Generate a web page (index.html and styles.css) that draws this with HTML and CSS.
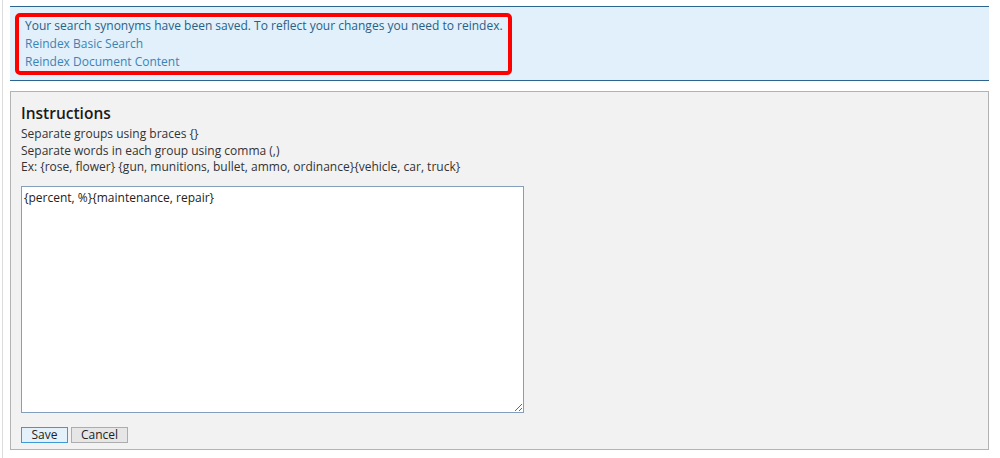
FILE: index.html
```html
<!DOCTYPE html>
<html>
<head>
<meta charset="utf-8">
<link rel="stylesheet" href="styles.css">
</head>
<body>
<div class="page">
  <div class="notice">
    <div class="msg">
      <div class="msg-text">Your search synonyms have been saved. To reflect your changes you need to reindex.</div>
      <a class="msg-link" href="#">Reindex Basic Search</a>
      <a class="msg-link" href="#">Reindex Document Content</a>
    </div>
  </div>
  <div class="panel">
    <h2 class="title">Instructions</h2>
    <div class="help">Separate groups using braces {}</div>
    <div class="help">Separate words in each group using comma (,)</div>
    <div class="help">Ex: {rose, flower} {gun, munitions, bullet, ammo, ordinance}{vehicle, car, truck}</div>
    <textarea class="editor">{percent, %}{maintenance, repair}</textarea>
    <div class="actions">
      <button class="btn btn-primary">Save</button>
      <button class="btn">Cancel</button>
    </div>
  </div>
</div>
</body>
</html>
```

FILE: styles.css
```css
html, body {
  margin: 0;
  padding: 0;
  background: #fff;
}
body {
  font-family: "Open Sans", "Noto Sans", sans-serif;
  font-size: 12px;
  color: #333;
}
.page {
  margin-left: 2px;
  border-left: 1px solid #dcdcdc;
  padding: 6px 0 0 7px;
  width: 979px;
  min-height: 452px;
}
.notice {
  background: #e1f0fa;
  border-top: 1px solid #2b6590;
  border-bottom: 1px solid #2b6590;
  padding: 6px 0 5px 5px;
}
.msg {
  display: inline-flex;
  flex-direction: column;
  border: 4px solid #ff0000;
  border-radius: 5px;
  padding: 0 5px 0 6px;
  line-height: 18px;
}
.msg-text {
  color: #2a5f87;
}
.msg-link {
  color: #3b83b6;
  text-decoration: none;
}
.panel {
  margin-top: 10px;
  background: #f2f2f3;
  border: 1px solid #b3b3b3;
  padding: 10px 10px 6px 10px;
}
.title {
  margin: 0 0 2px 0;
  font-size: 15.5px;
  font-weight: 600;
  color: #1a1a1a;
  line-height: 22px;
}
.help {
  line-height: 16.5px;
  color: #333;
}
.editor {
  display: block;
  margin-top: 10px;
  width: 503px;
  height: 227px;
  box-sizing: border-box;
  border: 1px solid #849fbb;
  background: #fff;
  font-family: "Open Sans", "Noto Sans", sans-serif;
  font-size: 12px;
  color: #222;
  padding: 2px 2px;
  resize: both;
  outline: none;
}
.actions {
  display: flex;
  gap: 3px;
  margin-top: 14px;
}
.btn {
  font-family: "Open Sans", "Noto Sans", sans-serif;
  font-size: 12px;
  height: 16px;
  line-height: 12px;
  padding: 0;
  width: 57px;
  border: 1px solid #adadad;
  background: #e6e6e6;
  color: #222;
  border-radius: 0;
}
.btn-primary {
  width: 47px;
  border-color: #3e9ad6;
  background: #e4f1fb;
}
```
